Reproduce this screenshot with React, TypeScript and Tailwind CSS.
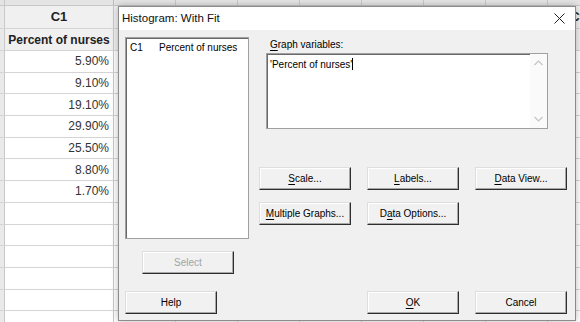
import React from 'react';

const values = ['5.90%', '9.10%', '19.10%', '29.90%', '25.50%', '8.80%', '1.70%'];
const otherCols = ['C2', 'C3', 'C4', 'C5', 'C6', 'C7', 'C8', 'C9'];

const Row: React.FC<{ c1?: React.ReactNode; header?: boolean; height: string; otherText?: (c: string) => React.ReactNode }> = ({ c1, header, height, otherText }) => (
  <div className={`flex border-b border-[#d4d4d4] ${height} ${header ? 'bg-[#f0f0f0]' : 'bg-white'}`}>
    <div className="w-[5px] shrink-0 border-r border-[#c8c8c8] bg-[#e9e9e9]" />
    <div className="w-[109px] shrink-0 border-r border-[#c8c8c8] flex items-center">{c1}</div>
    {otherCols.map(c => (
      <div key={c} className="w-[62px] shrink-0 border-r border-[#d4d4d4] flex items-center justify-center">
        {otherText ? otherText(c) : null}
      </div>
    ))}
  </div>
);

const Sheet: React.FC = () => (
  <div className="flex flex-col text-[#333] font-['Liberation_Sans',Arial,sans-serif]">
    <div className="flex h-[6px] bg-[#e4e4e4] border-b border-[#c8c8c8]">
      <div className="w-[5px] shrink-0 border-r border-[#c8c8c8]" />
      <div className="w-[109px] shrink-0 border-r border-[#bdbdbd]" />
      {otherCols.map(c => <div key={c} className="w-[62px] shrink-0 border-r border-[#c8c8c8]" />)}
    </div>
    <Row
      header
      height="h-[23px]"
      c1={<span className="w-full text-center text-[13px] font-bold text-[#222]">C1</span>}
      otherText={c => (c === 'C9' ? <span className="text-[13px] font-bold text-[#222]">{c}</span> : null)}
    />
    <Row
      header
      height="h-[22px]"
      c1={<span className="w-full text-center text-[12px] font-bold text-[#222]">Percent of nurses</span>}
    />
    {values.map(v => (
      <Row key={v} height="h-[21.7px]" c1={<span className="w-full text-right pr-[4px] text-[12px]">{v}</span>} />
    ))}
    {Array.from({ length: 7 }).map((_, i) => (
      <Row key={i} height="h-[21.7px]" />
    ))}
  </div>
);

const Btn: React.FC<{ children: React.ReactNode; disabled?: boolean; className?: string }> = ({ children, disabled, className = '' }) => (
  <div
    className={`w-[92px] h-[23px] shrink-0 flex items-center justify-center bg-[#f1f1f1] border border-t-[#dedede] border-l-[#dedede] border-r-[#2e2e2e] border-b-[#2e2e2e] shadow-[inset_-1px_-1px_0_#a8a8a8,inset_1px_1px_0_#ffffff] text-[10px] ${disabled ? 'text-[#a3a3a3]' : 'text-black'} ${className}`}
  >
    {children}
  </div>
);

const U: React.FC<{ children: React.ReactNode }> = ({ children }) => <span className="underline underline-offset-[2px]">{children}</span>;

export default function App() {
  return (
    <div className="relative w-[580px] h-[322px] overflow-hidden bg-white">
      <Sheet />

      {/* dialog window */}
      <div className="absolute left-[118px] top-[6px] w-[458px] h-[315px] flex flex-col border border-[#8c8c8c] shadow-[0_0_7px_rgba(0,0,0,0.28)] font-['Liberation_Sans',Arial,sans-serif]">
        <div className="h-[23px] shrink-0 bg-white flex items-center pl-[3px]">
          <span className="text-[11.5px] text-[#111]">Histogram: With Fit</span>
          <svg className="ml-auto mr-[10px]" width="11" height="11" viewBox="0 0 11 11">
            <path d="M0.5 0.5 L10.5 10.5 M10.5 0.5 L0.5 10.5" stroke="#222" strokeWidth="1" fill="none" />
          </svg>
        </div>

        <div className="flex-1 bg-[#f0f0f0] pl-[6px] pt-[7px] flex flex-col text-[10px] text-black">
          <div className="flex">
            <div className="w-[124px] shrink-0 flex flex-col">
              <div className="h-[202px] bg-white border border-[#a0a0a0] shadow-[inset_1px_1px_0_#696969] pl-[4px] pt-[3px]">
                <div className="flex leading-[13px]">
                  <span className="w-[29px]">C1</span>
                  <span>Percent of nurses</span>
                </div>
              </div>
              <Btn disabled className="ml-[17px] mt-[12px]">Select</Btn>
            </div>

            <div className="ml-[10px] flex flex-col">
              <div className="h-[16px] leading-[16px] pl-[11px]"><U>G</U>raph variables:</div>
              <div className="ml-[7px] w-[282px] h-[76px] bg-white border border-[#a0a0a0] shadow-[inset_1px_1px_0_#696969] flex">
                <div className="flex-1 pl-[3px] pt-[4px] leading-[13px]">
                  'Percent of nurses'<span className="inline-block w-px h-[12px] bg-black align-[-2px]" />
                </div>
                <div className="w-[17px] bg-[#fafafa] flex flex-col items-center justify-between py-[6px]">
                  <svg width="9" height="6" viewBox="0 0 9 6"><path d="M0.5 5 L4.5 1 L8.5 5" stroke="#c4c4c4" strokeWidth="1.2" fill="none" /></svg>
                  <svg width="9" height="6" viewBox="0 0 9 6"><path d="M0.5 1 L4.5 5 L8.5 1" stroke="#c4c4c4" strokeWidth="1.2" fill="none" /></svg>
                </div>
              </div>
              <div className="mt-[38px] flex gap-x-[16px]">
                <Btn><U>S</U>cale...</Btn>
                <Btn><U>L</U>abels...</Btn>
                <Btn><U>D</U>ata View...</Btn>
              </div>
              <div className="mt-[12px] flex gap-x-[16px]">
                <Btn><U>M</U>ultiple Graphs...</Btn>
                <Btn>D<U>a</U>ta Options...</Btn>
              </div>
            </div>
          </div>

          <div className="mt-[17px] flex">
            <Btn>Help</Btn>
            <Btn className="ml-[150px]"><U>O</U>K</Btn>
            <Btn className="ml-[16px]">Cancel</Btn>
          </div>
        </div>
      </div>
    </div>
  );
}
